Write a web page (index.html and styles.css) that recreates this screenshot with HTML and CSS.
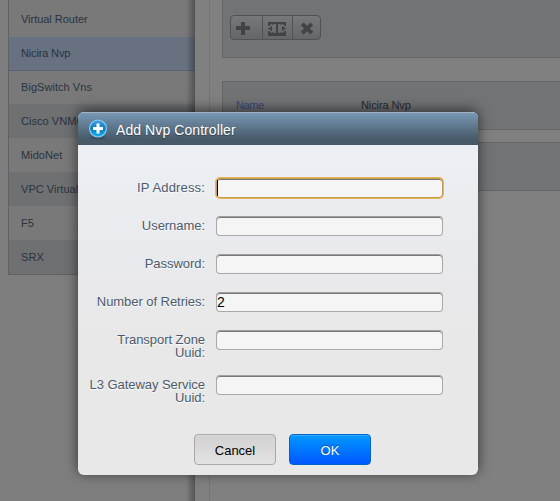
FILE: index.html
```html
<!DOCTYPE html>
<html lang="en">
<head>
<meta charset="utf-8">
<title>Add Nvp Controller</title>
<link rel="stylesheet" href="styles.css">
</head>
<body>
<div class="app">
  <aside class="sidebar">
    <ul class="list">
      <li>Virtual Router</li>
      <li class="selected">Nicira Nvp</li>
      <li>BigSwitch Vns</li>
      <li class="alt">Cisco VNMC</li>
      <li>MidoNet</li>
      <li class="alt">VPC Virtual Router</li>
      <li>F5</li>
      <li class="alt">SRX</li>
    </ul>
  </aside>
  <main class="panel">
    <div class="content">
      <section class="card tools">
        <div class="toolbar">
          <span class="tool"><svg width="31" height="23" viewBox="0 0 31 23"><path d="M10 6h4v4h5v4h-5v5h-4v-5H5v-4h5z"/></svg></span>
          <span class="tool"><svg width="29" height="23" viewBox="0 0 29 23"><path fill-rule="evenodd" d="M5 6h18v4h-1l-3-2.500v1.500c-1-.8-2.500-1-4-1v9c1.500 0 3-.2 4-1v1.500l3-2.500h1v5H5v-5h1l3 2.500v-1.500c1 .8 2.500 1 4 1V8c-1.500 0-3 .2-4 1V7.500L6 10H5z"/><path d="M5 12.500l4-2.500v5zM23 12.500l-4-2.500v5z"/></svg></span>
          <span class="tool"><svg width="28" height="23" viewBox="0 0 28 23"><path d="M10.500 6.500l3.500 3.300 3.500-3.300 2.700 2.700-3.300 3.300 3.300 3.300-2.700 2.700-3.500-3.300-3.500 3.300-2.700-2.700 3.300-3.300-3.300-3.300z"/></svg></span>
        </div>
      </section>
      <section class="card row"><span class="key">Name</span><span class="value">Nicira Nvp</span></section>
      <section class="card row second"></section>
    </div>
  </main>
</div>
<div class="dialog">
  <header class="title">
    <svg width="20" height="21" viewBox="0 0 20 21">
      <defs><linearGradient id="g" x2="0" y2="1"><stop stop-color="#4d9ee2"/><stop offset=".5" stop-color="#087dc0"/><stop offset="1" stop-color="#18b3ee"/></linearGradient></defs>
      <ellipse cx="10" cy="18.500" rx="8" ry="2" fill="#344758" opacity=".6"/>
      <circle cx="10" cy="9.500" r="8.400" fill="url(#g)" stroke="#79c8f2" stroke-width="1.300"/>
      <path d="M8.500 4.500h3V8H15v3h-3.500v3.500h-3V11H5V8h3.500z" fill="#fff"/>
    </svg>
    <span>Add Nvp Controller</span>
  </header>
  <form class="form">
    <div class="field focused"><label class="wide">IP Address:</label><div class="input"><i class="caret"></i></div></div>
    <div class="field"><label>Username:</label><div class="input"></div></div>
    <div class="field"><label>Password:</label><div class="input"></div></div>
    <div class="field"><label>Number of Retries:</label><div class="input">2</div></div>
    <div class="field tall"><label>Transport Zone Uuid:</label><div class="input"></div></div>
    <div class="field"><label>L3 Gateway Service Uuid:</label><div class="input"></div></div>
  </form>
  <footer class="actions">
    <button type="button" class="btn">Cancel</button>
    <button type="button" class="btn ok">OK</button>
  </footer>
</div>
</body>
</html>
```
FILE: styles.css
```css
* { box-sizing: border-box; }
body {
  margin: 0;
  height: 501px;
  overflow: hidden;
  position: relative;
  background: #808080;
  font-family: "Liberation Sans", Arial, sans-serif;
  font-size: 11px;
  color: #293340;
}
.app { display: flex; height: 501px; }
.sidebar {
  flex: 0 0 195px;
  padding-left: 8px;
  background: #7e7e7e;
  position: relative;
}
.sidebar::after {
  content: "";
  position: absolute;
  top: 0;
  right: 0;
  width: 9px;
  height: 100%;
  background: linear-gradient(to right, transparent, rgba(0,0,0,.32));
}
.list {
  list-style: none;
  margin: 0;
  padding: 2px 0 0;
  height: 275px;
  border-left: 1px solid #606163;
  border-bottom: 1px solid #606163;
  background: #797979;
}
.list li {
  height: 34px;
  line-height: 34px;
  padding-left: 12px;
  letter-spacing: .05px;
}
.list li:first-child { height: 35px; letter-spacing: -.03px; }
.list .selected { height: 34px; background: #687180; border-bottom: 1px solid #5c6179; line-height: 32px; letter-spacing: -.15px; }
.list li:nth-child(3) { height: 33px; line-height: 32px; }
.list .alt { background: #6f7072; }
.panel { flex: 1; padding-left: 14px; }
.content { height: 501px; border-left: 1px solid #737373; padding-left: 12px; }
.card {
  background: #727375;
  border: 1px solid #656667;
  border-right: 0;
}
.tools { height: 58px; border-top: 0; padding: 15px 0 0 7px; }
.toolbar {
  display: flex;
  width: 91px;
  height: 25px;
  border: 1px solid #505256;
  border-radius: 4px;
  background: linear-gradient(#77787a, #646669);
}
.tool { display: flex; }
.tool + .tool { border-left: 1px solid #505256; }
.tool svg { fill: #414346; }
.row { height: 49px; margin-top: 23px; display: flex; padding: 17px 0 0 13px; }
.row.second { margin-top: 12px; }
.key { width: 125px; color: #344a78; letter-spacing: -.4px; }
.value { color: #292b30; letter-spacing: -.1px; }
.dialog {
  position: absolute;
  left: 78px;
  top: 112px;
  width: 400px;
  height: 363px;
  border-radius: 6px;
  overflow: hidden;
  background: linear-gradient(#ecf0f4 33px, #e9eaed 130px, #e8e8e8 230px);
  box-shadow: 0 -2px 13px rgba(0,0,0,.6);
}
.title {
  height: 33px;
  display: flex;
  align-items: center;
  gap: 8px;
  padding: 2px 0 0 10px;
  border-top: 1px solid #a0b2c4;
  background: linear-gradient(#7897b4, #485b6b 80%, #485866);
  color: #fff;
  font-size: 14px;
  letter-spacing: .08px;
  text-shadow: 0 1px 1px #34414d;
}
.title svg { margin-top: -1px; }
.form { padding: 33px 0 0; height: 289px; }
.field { display: flex; height: 38px; gap: 11px; }
.field.tall { height: 45px; }
.field label {
  width: 120px;
  margin-left: 7px;
  padding-top: 3px;
  text-align: right;
  font-size: 13px;
  line-height: 13px;
  letter-spacing: -.05px;
  color: #4b5a6b;
  text-shadow: 0 1px 1px #fff;
}
.field .wide { letter-spacing: .15px; }
.input {
  width: 227px;
  height: 20px;
  border: 1px solid #a9a9a9;
  border-top: 1px solid #a0a0a0;
  border-radius: 4px;
  background: #f5f5f5;
  box-shadow: inset 0 1px #777;
  font-size: 14px;
  line-height: 19px;
  color: #000;
}
.focused .input { box-shadow: 0 0 0 1px #e8b64f, inset 0 1px #777; border-color: #c39a55; }
.caret { display: block; width: 1px; height: 16px; margin-top: 1px; background: #000; }
.actions { display: flex; gap: 13px; padding-left: 116px; }
.btn {
  width: 82px;
  height: 31px;
  padding: 2px 0 0;
  border: 1px solid #a8a8a8;
  border-radius: 4px;
  background: linear-gradient(#d2d0d0, #e3e3e3);
  box-shadow: inset 0 1px rgba(255,255,255,.2);
  font: 13px "Liberation Sans", Arial, sans-serif;
  color: #000;
}
.btn.ok {
  border-color: #0065c5;
  background: linear-gradient(#0098ff, #0057ff);
  color: #fff;
  text-shadow: 0 -1px 1px #004ca5;
}
```
